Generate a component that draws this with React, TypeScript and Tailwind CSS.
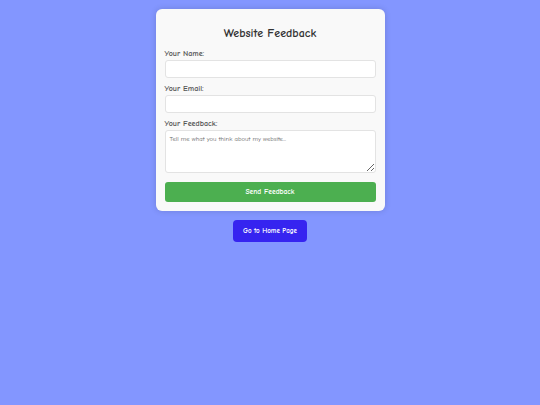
const font = {
  fontFamily: '"Comic Sans MS", "Comic Neue", "Noto Sans", sans-serif',
};

const labelCls = "text-[8px] font-bold text-[#555] leading-[10px] mb-[1px]";
const fieldCls =
  "bg-white border border-[#e3e3e3] rounded-[3px] outline-none";

export default function App() {
  return (
    <div
      className="min-h-[405px] w-full bg-[#8396ff] flex flex-col items-center pt-[9px]"
      style={font}
    >
      <div className="w-[229px] bg-[#f9f9f9] rounded-md shadow-[0_0_6px_rgba(0,0,0,0.15)] px-[9px] pt-[16px] pb-[9px]">
        <h1 className="text-center text-[12px] font-bold text-[#333] leading-[16px] mb-[8px]">
          Website Feedback
        </h1>
        <form className="flex flex-col" onSubmit={(e) => e.preventDefault()}>
          <label className={labelCls}>Your Name:</label>
          <input type="text" className={`h-[18px] mb-[6px] ${fieldCls}`} />
          <label className={labelCls}>Your Email:</label>
          <input type="email" className={`h-[18px] mb-[6px] ${fieldCls}`} />
          <label className={labelCls}>Your Feedback:</label>
          <textarea
            placeholder="Tell me what you think about my website..."
            className={`h-[43px] mb-[9px] px-[4px] py-[4px] text-[6.6px] leading-[9px] placeholder:text-[#666] ${fieldCls}`}
            style={font}
          />
          <button
            type="submit"
            className="h-[20px] bg-[#4caf50] text-white text-[7.5px] font-bold rounded-[3px]"
            style={font}
          >
            Send Feedback
          </button>
        </form>
      </div>
      <button
        className="mt-[9px] w-[74px] h-[22px] bg-[#3624f0] text-white text-[7px] font-bold rounded-[4px]"
        style={font}
      >
        Go to Home Page
      </button>
    </div>
  );
}
